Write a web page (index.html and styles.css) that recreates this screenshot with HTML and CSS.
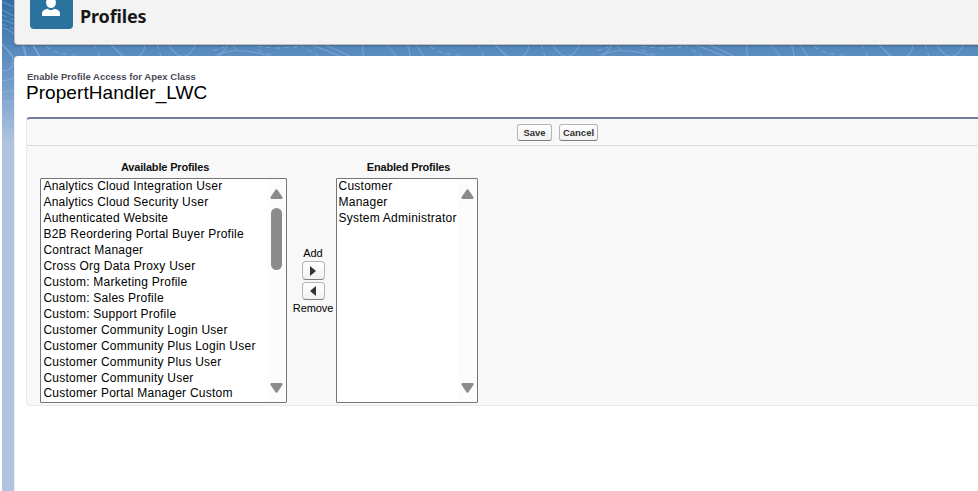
FILE: index.html
```html
<!DOCTYPE html>
<html lang="en">
<head>
<meta charset="utf-8">
<title>Profiles</title>
<link rel="stylesheet" href="styles.css">
</head>
<body>
<div class="page">
  <svg class="backdrop" width="976" height="150" viewBox="2 0 976 150" aria-hidden="true">
    <defs>
      <g id="contours">
        <path d="M364 44Q361 50 364 57M386 44L397 57M407 44Q410 50 410 57M416 44L424 57M494 44L508 57M529 44Q529 52 522 57M552 44Q568 69 580 44"/>
        <path d="M612 44Q608 52 602 57M616 44L621 51M600 55Q620 47 646 54L660 58M694 44L726 57M708 44Q722 51 736 57"/>
        <path stroke-dasharray="5 4" d="M430 46Q440 55 462 55M478 44L484 57M541 44L545 57M597 51L608 47M641 46Q664 50 684 46M642 50L662 57M684 45L702 56"/>
      </g>
    </defs>
    <g class="contour-lines">
      <use href="#contours" x="-384"/>
      <use href="#contours"/>
      <use href="#contours" x="384"/>
      <path d="M2 2L14 7M2 10L14 16M2 20Q9 21 14 24M2 28Q9 29 14 34M2 44L12 55Q15 64 10 69Q7 71 2 71M22 44L26 57M33 44L40 57M2 81Q8 80 14 78M2 93Q8 90 14 91M2 102Q8 100 14 102M2 119L14 122"/>
      <path stroke-dasharray="5 4" d="M2 15L14 20M2 24L14 29"/>
    </g>
  </svg>
  <header class="page-header">
    <div class="header-icon">
      <svg width="43" height="29" viewBox="0 0 43 29"><ellipse cx="21" cy="2.500" rx="4.900" ry="5.500"/><path d="M12 15.500V13.500Q12 10 17.500 8.800Q21 11.500 24.500 8.800Q30 10 30 13.500V15.500Q30 16 29 16H13Q12 16 12 15.500Z"/></svg>
    </div>
    <h1>Profiles</h1>
  </header>
  <main class="content">
    <p class="eyebrow">Enable Profile Access for Apex Class</p>
    <h2>PropertHandler_LWC</h2>
    <section class="panel">
      <div class="toolbar">
        <button class="btn save">Save</button>
        <button class="btn cancel">Cancel</button>
      </div>
      <div class="duel">
        <div class="column available">
          <h3>Available Profiles</h3>
          <div class="listbox">
            <ul>
              <li>Analytics Cloud Integration User</li>
              <li>Analytics Cloud Security User</li>
              <li>Authenticated Website</li>
              <li>B2B Reordering Portal Buyer Profile</li>
              <li>Contract Manager</li>
              <li>Cross Org Data Proxy User</li>
              <li>Custom: Marketing Profile</li>
              <li>Custom: Sales Profile</li>
              <li>Custom: Support Profile</li>
              <li>Customer Community Login User</li>
              <li>Customer Community Plus Login User</li>
              <li>Customer Community Plus User</li>
              <li>Customer Community User</li>
              <li class="last">Customer Portal Manager Custom</li>
            </ul>
            <div class="scrollbar">
              <svg width="13" height="10" viewBox="0 0 13 10"><path d="M5.500 .8Q6.500 -.4 7.500 .8L12.400 8Q13 10 11.500 10H1.500Q0 10 .6 8Z"/></svg>
              <div class="thumb"></div>
              <svg class="down" width="13" height="10" viewBox="0 0 13 10"><path d="M5.500 9.200Q6.500 10.400 7.500 9.200L12.400 2Q13 0 11.500 0H1.500Q0 0 .6 2Z"/></svg>
            </div>
          </div>
        </div>
        <div class="transfer">
          <span>Add</span>
          <button class="arrow" aria-label="Add"><svg width="6" height="10" viewBox="0 0 6 10"><path d="M0 0L6 5L0 10Z"/></svg></button>
          <button class="arrow back" aria-label="Remove"><svg width="6" height="10" viewBox="0 0 6 10"><path d="M6 0L0 5L6 10Z"/></svg></button>
          <span class="remove">Remove</span>
        </div>
        <div class="column enabled">
          <h3>Enabled Profiles</h3>
          <div class="listbox">
            <ul>
              <li>Customer</li>
              <li>Manager</li>
              <li>System Administrator</li>
            </ul>
            <div class="scrollbar">
              <svg width="13" height="10" viewBox="0 0 13 10"><path d="M5.500 .8Q6.500 -.4 7.500 .8L12.400 8Q13 10 11.500 10H1.500Q0 10 .6 8Z"/></svg>
              <svg class="down" width="13" height="10" viewBox="0 0 13 10"><path d="M5.500 9.200Q6.500 10.400 7.500 9.200L12.400 2Q13 0 11.500 0H1.500Q0 0 .6 2Z"/></svg>
            </div>
          </div>
        </div>
      </div>
    </section>
  </main>
</div>
</body>
</html>
```

FILE: styles.css
```css
* { box-sizing: border-box; }
body { margin: 0; background: #fff; font-family: "Liberation Sans", Arial, sans-serif; color: #000; overflow: hidden; }
h1, h2, h3, p, ul { margin: 0; padding: 0; }
.page { position: relative; height: 491px; margin-left: 2px; padding-left: 12px; background: linear-gradient(#3470a8 0, #4079af 25px, #5b8dbf 55px, #779fcc 90px, #b0c4df 142px); }
.backdrop { position: absolute; left: 0; top: 0; }
.contour-lines { fill: none; stroke: #a9c8e8; stroke-opacity: .4; stroke-width: 1.1; }
.page-header { position: relative; display: flex; height: 45px; padding-left: 15px; border: solid #c2c3c1; border-width: 0 0 1px 1px; border-radius: 0 0 0 4px; background: #f3f3f3; box-shadow: 0 1px 2px rgba(0,0,0,.25); }
.header-icon { width: 43px; height: 29px; border-radius: 0 0 4px 4px; background: #2a739e; }
.header-icon svg { display: block; fill: #fff; }
h1 { margin: 4px 0 0 7px; font: 700 18px/25px "Noto Sans", "Open Sans", sans-serif; letter-spacing: -.15px; color: #181818; }
.content { position: relative; height: 435px; margin-top: 11px; padding: 15px 0 0 12px; border-left: 1px solid #eef0f4; border-radius: 4px 0 0 0; background: #fff; }
.eyebrow { font-size: 9.5px; line-height: 12px; font-weight: 700; letter-spacing: .03px; color: #4a4a56; white-space: nowrap; }
h2 { height: 34px; margin-left: -1px; font-size: 19px; line-height: 20px; font-weight: 400; letter-spacing: .06px; white-space: nowrap; }
.panel { height: 289px; border: 1px solid #eaeaea; border-top: 2px solid #747e96; border-right: 0; border-radius: 4px 0 0 4px; margin-left: -1px; background: #f8f8f8; }
.toolbar { display: flex; gap: 7px; height: 27px; padding: 5px 0 0 490px; border-bottom: 1px solid #dbdbdb; }
.btn, .arrow { padding: 0; border: 1px solid #b5b5b5; border-bottom-color: #7f7f7f; border-radius: 3px; background: linear-gradient(#fff, #f1f1f1); }
.btn { height: 17px; font: 700 9.5px/15px "Liberation Sans", sans-serif; color: #333; }
.save { width: 35px; }
.cancel { width: 39px; }
.duel { display: flex; padding: 14px 0 0 13px; }
h3 { height: 18px; font-size: 11px; line-height: 15px; letter-spacing: -.17px; text-align: center; white-space: nowrap; color: #111; }
.available { width: 247px; }
.available h3 { padding-left: 3px; }
.enabled { width: 142px; }
.enabled h3 { padding-left: 3px; }
.listbox { display: flex; justify-content: space-between; height: 225px; overflow: hidden; border: 1px solid #767676; border-radius: 1px; background: #fff; }
ul { width: 0; padding-left: 2.4px; list-style: none; font-size: 12px; line-height: 16px; letter-spacing: .24px; white-space: nowrap; }
.enabled ul { padding-left: 1.5px; }
li { height: 16px; }
li:first-child { margin-top: -1px; }
.last { margin-top: -1px; }
.scrollbar { display: flex; flex-direction: column; align-items: center; width: 19px; padding: 10px 0 9px; background: #fcfcfc; fill: #8b8b8b; }
.thumb { width: 11px; height: 62px; margin-top: 9px; border-radius: 6px; background: #8b8b8b; }
.down { margin-top: auto; }
.transfer { display: flex; flex-direction: column; align-items: center; width: 49px; padding: 86px 0 0 3px; font-size: 11px; line-height: 15px; }
.transfer > span { white-space: nowrap; letter-spacing: -.1px; }
.arrow { display: flex; align-items: center; justify-content: center; width: 23px; height: 19px; margin-bottom: 2px; border-radius: 4px; fill: #333; }
.arrow.back { height: 18px; margin-bottom: 1px; }
```
